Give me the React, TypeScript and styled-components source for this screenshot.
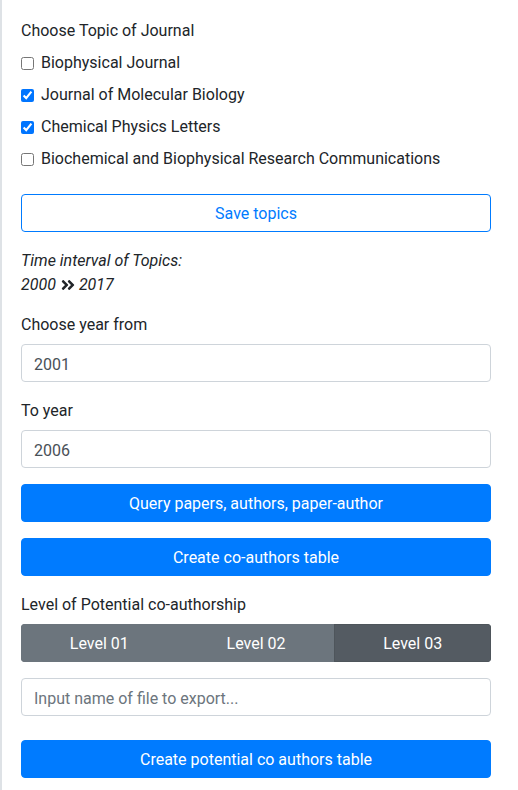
import React from "react";
import styled, { createGlobalStyle } from "styled-components";
import { FaAngleDoubleRight } from "react-icons/fa";

const GlobalStyle = createGlobalStyle`
  html, body { margin: 0; padding: 0; background: #fff; }
  body {
    font-family: Roboto, "Liberation Sans", sans-serif;
    font-size: 16px;
    line-height: 24px;
    color: #212529;
  }
  * { box-sizing: border-box; }
`;

const Panel = styled.div`
  width: 518px;
  min-height: 790px;
  border-left: 2px solid #dee2e6;
  padding: 18px 27px 12px 19px;
  display: flex;
  flex-direction: column;
`;

const Label = styled.div<{ $mb?: number; $mt?: number }>`
  padding-top: 1px;
  margin-top: ${(p) => p.$mt ?? 0}px;
  margin-bottom: ${(p) => (p.$mb ?? 8) - 1}px;
`;

const CheckList = styled.div`
  display: flex;
  flex-direction: column;
  gap: 8px;
`;

const CheckRow = styled.label`
  display: flex;
  align-items: center;
  gap: 7px;
  height: 24px;
  padding-top: 2px;
`;

const CheckBox = styled.input`
  width: 13px;
  height: 13px;
  margin: 0;
  accent-color: #0075ff;
`;

const Button = styled.button<{ $variant: "primary" | "outline"; $mt: number }>`
  display: block;
  width: 100%;
  height: 38px;
  margin-top: ${(p) => p.$mt}px;
  border-radius: 4px;
  font-family: inherit;
  font-size: 16px;
  line-height: 24px;
  padding: 7px 12px 5px;
  border: 1px solid #007bff;
  background: ${(p) => (p.$variant === "primary" ? "#007bff" : "#fff")};
  color: ${(p) => (p.$variant === "primary" ? "#fff" : "#007bff")};
`;

const Interval = styled.div`
  margin-top: 16px;
  padding-top: 1px;
  margin-bottom: -1px;
  font-style: italic;
`;

const Chevrons = styled(FaAngleDoubleRight)`
  font-size: 16px;
  vertical-align: -3px;
  margin: 0 3px 0 4px;
`;

const Input = styled.input`
  display: block;
  width: 100%;
  height: 38px;
  padding: 7px 12px 5px;
  border: 1px solid #ced4da;
  border-radius: 4px;
  font-family: inherit;
  font-size: 16px;
  line-height: 24px;
  color: #495057;
  background: #fff;
  &::placeholder { color: #6c757d; }
`;

const Group = styled.div`
  display: flex;
  height: 38px;
  border-radius: 4px;
  overflow: hidden;
`;

const GroupButton = styled.button<{ $active?: boolean }>`
  flex: 1;
  border: 1px solid ${(p) => (p.$active ? "#4e555b" : "#6c757d")};
  background: ${(p) => (p.$active ? "#545b62" : "#6c757d")};
  color: #fff;
  font-family: inherit;
  font-size: 16px;
  line-height: 24px;
  padding: 7px 12px 5px;
`;

const Spacer = styled.div`
  height: 16px;
`;

const topics = [
  { name: "Biophysical Journal", checked: false },
  { name: "Journal of Molecular Biology", checked: true },
  { name: "Chemical Physics Letters", checked: true },
  { name: "Biochemical and Biophysical Research Communications", checked: false },
];

export default function App() {
  return (
    <>
      <GlobalStyle />
      <Panel>
        <Label>Choose Topic of Journal</Label>
        <CheckList>
          {topics.map((t) => (
            <CheckRow key={t.name}>
              <CheckBox type="checkbox" defaultChecked={t.checked} />
              {t.name}
            </CheckRow>
          ))}
        </CheckList>
        <Button $variant="outline" $mt={24}>Save topics</Button>
        <Interval>
          Time interval of Topics:
          <br />
          2000
          <Chevrons />
          2017
        </Interval>
        <Label $mt={16}>Choose year from</Label>
        <Input defaultValue="2001" />
        <Label $mt={16}>To year</Label>
        <Input defaultValue="2006" />
        <Button $variant="primary" $mt={16}>Query papers, authors, paper-author</Button>
        <Button $variant="primary" $mt={16}>Create co-authors table</Button>
        <Label $mt={16}>Level of Potential co-authorship</Label>
        <Group>
          <GroupButton>Level 01</GroupButton>
          <GroupButton>Level 02</GroupButton>
          <GroupButton $active>Level 03</GroupButton>
        </Group>
        <Spacer />
        <Input placeholder="Input name of file to export..." />
        <Button $variant="primary" $mt={24}>Create potential co authors table</Button>
      </Panel>
    </>
  );
}
